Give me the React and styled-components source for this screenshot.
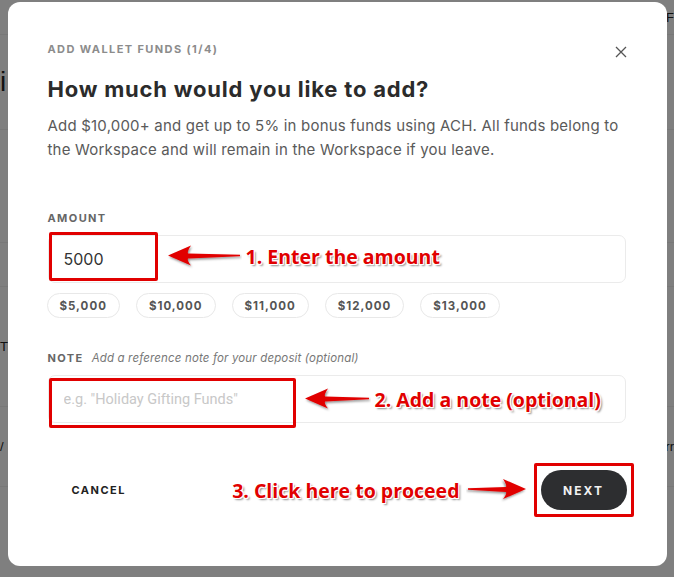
import React, { useState } from "react";
import styled, { createGlobalStyle } from "styled-components";

const GlobalStyle = createGlobalStyle`
  html, body {
    margin: 0;
    padding: 0;
    background: #fff;
    font-family: "Inter", "Liberation Sans", sans-serif;
  }
  * { box-sizing: border-box; }
`;

const AMOUNTS = ["$5,000", "$10,000", "$11,000", "$12,000", "$13,000"];

function Arrow({ dir = "left", width = 74 }) {
  // red callout arrow, tapered tail, drawn pointing left then mirrored
  const flip = dir === "right" ? `translate(${width} 0) scale(-1 1)` : undefined;
  return (
    <ArrowSvg width={width} height="26" viewBox={`0 0 ${width} 26`}>
      <defs>
        <filter id={`sh-${dir}-${width}`} x="-10%" y="-30%" width="130%" height="170%">
          <feDropShadow dx="1" dy="1.5" stdDeviation="1" floodColor="#000" floodOpacity="0.45" />
        </filter>
      </defs>
      <g transform={flip} filter={`url(#sh-${dir}-${width})`}>
        <path
          d={`M2 12 L25 2 Q21 8 22 10 L${width - 2} 11.3 L${width - 2} 12.7 L22 15 Q21 17 25 22 Z`}
          fill="#e10000"
        />
      </g>
    </ArrowSvg>
  );
}

export default function App() {
  const [amount, setAmount] = useState("5000");
  const [note, setNote] = useState("");

  return (
    <>
      <GlobalStyle />
      <Page>
        <PageRow $h={35}>
          <span />
          <EdgeText>F</EdgeText>
        </PageRow>
        <PageRow $h={95}>
          <EdgeText $big>i</EdgeText>
        </PageRow>
        <PageRow $h={113} />
        <PageRow $h={44} />
        <PageRow $h={120}>
          <EdgeText>T</EdgeText>
        </PageRow>
        <PageRow $h={80}>
          <EdgeText>/</EdgeText>
          <EdgeText>rr</EdgeText>
        </PageRow>
      </Page>

      <Overlay>
        <Modal>
          <TopRow>
            <Eyebrow>Add wallet funds (1/4)</Eyebrow>
            <CloseButton aria-label="Close">
              <svg width="12" height="12" viewBox="0 0 12 12">
                <path d="M1 1 L11 11 M11 1 L1 11" stroke="#555" strokeWidth="1.3" />
              </svg>
            </CloseButton>
          </TopRow>
          <Title>How much would you like to add?</Title>
          <Lead>
            Add $10,000+ and get up to 5% in bonus funds using ACH. All funds belong to
            the Workspace and will remain in the Workspace if you leave.
          </Lead>

          <FieldLabel $gap={49}>Amount</FieldLabel>
          <InputBox>
            <Field value={amount} onChange={(e) => setAmount(e.target.value)} />
            <Highlight style={{ left: 0, top: -4, width: 109, height: 49 }} />
            <Callout $shift={-3} style={{ left: 117 }}>
              <Arrow width={76} />
              <CalloutText>1. Enter the amount</CalloutText>
            </Callout>
          </InputBox>
          <Chips>
            {AMOUNTS.map((a) => (
              <Chip key={a} onClick={() => setAmount(a.replace(/[$,]/g, ""))}>
                {a}
              </Chip>
            ))}
          </Chips>

          <FieldLabel $gap={33}>
            Note <Hint>Add a reference note for your deposit (optional)</Hint>
          </FieldLabel>
          <InputBox>
            <Field
              $placeholder
              placeholder='e.g. "Holiday Gifting Funds"'
              value={note}
              onChange={(e) => setNote(e.target.value)}
            />
            <Highlight style={{ left: 0, top: 2, width: 247, height: 50 }} />
            <Callout style={{ left: 254 }}>
              <Arrow width={68} />
              <CalloutText>2. Add a note (optional)</CalloutText>
            </Callout>
          </InputBox>

          <Footer>
            <CancelButton>Cancel</CancelButton>
            <FooterRight>
              <CalloutText>3. Click here to proceed</CalloutText>
              <Arrow dir="right" width={62} />
              <NextWrap>
                <NextButton>Next</NextButton>
              </NextWrap>
            </FooterRight>
          </Footer>
        </Modal>
      </Overlay>
    </>
  );
}

const Page = styled.div`
  display: flex;
  flex-direction: column;
  min-height: 577px;
  background: #fff;
`;

const PageRow = styled.div`
  height: ${(p) => p.$h}px;
  border-bottom: 1px solid #f0f0f0;
  display: flex;
  justify-content: space-between;
  align-items: center;
`;

const EdgeText = styled.span`
  font-family: "Liberation Sans", sans-serif;
  font-size: ${(p) => (p.$big ? 28 : 13)}px;
  color: #222;
`;

const Overlay = styled.div`
  position: fixed;
  inset: 0;
  background: rgba(0, 0, 0, 0.5);
  display: flex;
  justify-content: center;
  align-items: flex-start;
  padding-top: 2px;
`;

const Modal = styled.div`
  width: 659px;
  height: 564px;
  background: #fff;
  border-radius: 12px;
  padding: 38px 41px 0 40px;
  display: flex;
  flex-direction: column;
  color: #2b2b2b;
`;

const TopRow = styled.div`
  display: flex;
  justify-content: space-between;
  align-items: center;
  height: 18px;
`;

const Eyebrow = styled.div`
  font-size: 11px;
  font-weight: 700;
  letter-spacing: 1.4px;
  text-transform: uppercase;
  color: #8c8c8c;
`;

const CloseButton = styled.button`
  border: 0;
  background: none;
  padding: 0;
  margin: 6px -1px 0 0;
  width: 12px;
  height: 12px;
  display: flex;
  cursor: pointer;
`;

const Title = styled.h2`
  margin: 16px 0 0;
  font-size: 22px;
  line-height: 30px;
  font-weight: 700;
  color: #2b2b2b;
  letter-spacing: 0.8px;
`;

const Lead = styled.p`
  margin: 10px 0 0;
  font-size: 15px;
  line-height: 24px;
  letter-spacing: 0.2px;
  color: #5a5a5a;
`;

const FieldLabel = styled.div`
  margin-top: ${(p) => p.$gap}px;
  font-size: 11px;
  line-height: 14px;
  font-weight: 700;
  letter-spacing: 1.4px;
  text-transform: uppercase;
  color: #666;
`;

const Hint = styled.span`
  margin-left: 4px;
  font-size: 11.5px;
  font-weight: 400;
  font-style: italic;
  letter-spacing: 0.15px;
  text-transform: none;
  color: #777;
`;

const InputBox = styled.div`
  position: relative;
  margin-top: 10px;
  height: 48px;
  border: 1px solid #ebebeb;
  border-radius: 7px;
  display: flex;
  align-items: center;
`;

const Field = styled.input`
  border: 0;
  outline: none;
  background: transparent;
  width: 220px;
  padding: 0 0 0 15px;
  font-family: ${(p) => (p.$placeholder ? "Roboto" : "Inter")}, "Liberation Sans", sans-serif;
  font-size: ${(p) => (p.$placeholder ? 14.5 : 16)}px;
  color: #333;
  &::placeholder {
    color: #c8c8c8;
  }
`;

const Highlight = styled.div`
  position: absolute;
  border: 3px solid #e10000;
  border-radius: 2px;
  pointer-events: none;
`;

const Callout = styled.div`
  position: absolute;
  top: 50%;
  transform: translateY(calc(-50% + ${(p) => p.$shift || 0}px));
  display: flex;
  align-items: center;
  gap: 4px;
  pointer-events: none;
`;

const ArrowSvg = styled.svg`
  display: block;
  flex: none;
`;

const CalloutText = styled.span`
  font-family: "Open Sans", "Liberation Sans", sans-serif;
  font-size: 19.5px;
  font-weight: 700;
  color: #e10000;
  white-space: nowrap;
  text-shadow: -1px -1px 0 #fff, 1px -1px 0 #fff, -1px 1px 0 #fff, 1px 1px 0 #fff,
    0 -1px 0 #fff, 0 1px 0 #fff, 2px 2px 2px rgba(0, 0, 0, 0.45);
`;

const Chips = styled.div`
  display: flex;
  gap: 16px;
  margin: 10px 0 0 -1px;
`;

const Chip = styled.button`
  height: 25px;
  padding: 0 12px;
  border: 1px solid #e8e8e8;
  border-radius: 13px;
  background: #fff;
  font-family: "Inter", "Liberation Sans", sans-serif;
  font-size: 11.5px;
  font-weight: 700;
  letter-spacing: 1px;
  color: #555;
  cursor: pointer;
`;

const Footer = styled.div`
  margin-top: 40px;
  display: flex;
  justify-content: space-between;
  align-items: center;
`;

const CancelButton = styled.button`
  border: 0;
  background: none;
  padding: 0 0 0 24px;
  font-family: "Inter", "Liberation Sans", sans-serif;
  font-size: 11px;
  font-weight: 700;
  letter-spacing: 1.5px;
  text-transform: uppercase;
  color: #222;
  cursor: pointer;
`;

const FooterRight = styled.div`
  display: flex;
  align-items: center;
  gap: 6px;
`;

const NextWrap = styled.div`
  border: 3px solid #e10000;
  border-radius: 2px;
  padding: 4px 4px;
  margin: 0 -8px 0 0;
`;

const NextButton = styled.button`
  width: 86px;
  height: 40px;
  border: 0;
  border-radius: 20px;
  background: #2d2e30;
  color: #f2f2f2;
  font-family: "Inter", "Liberation Sans", sans-serif;
  font-size: 12px;
  font-weight: 700;
  letter-spacing: 2px;
  text-transform: uppercase;
  cursor: pointer;
`;
